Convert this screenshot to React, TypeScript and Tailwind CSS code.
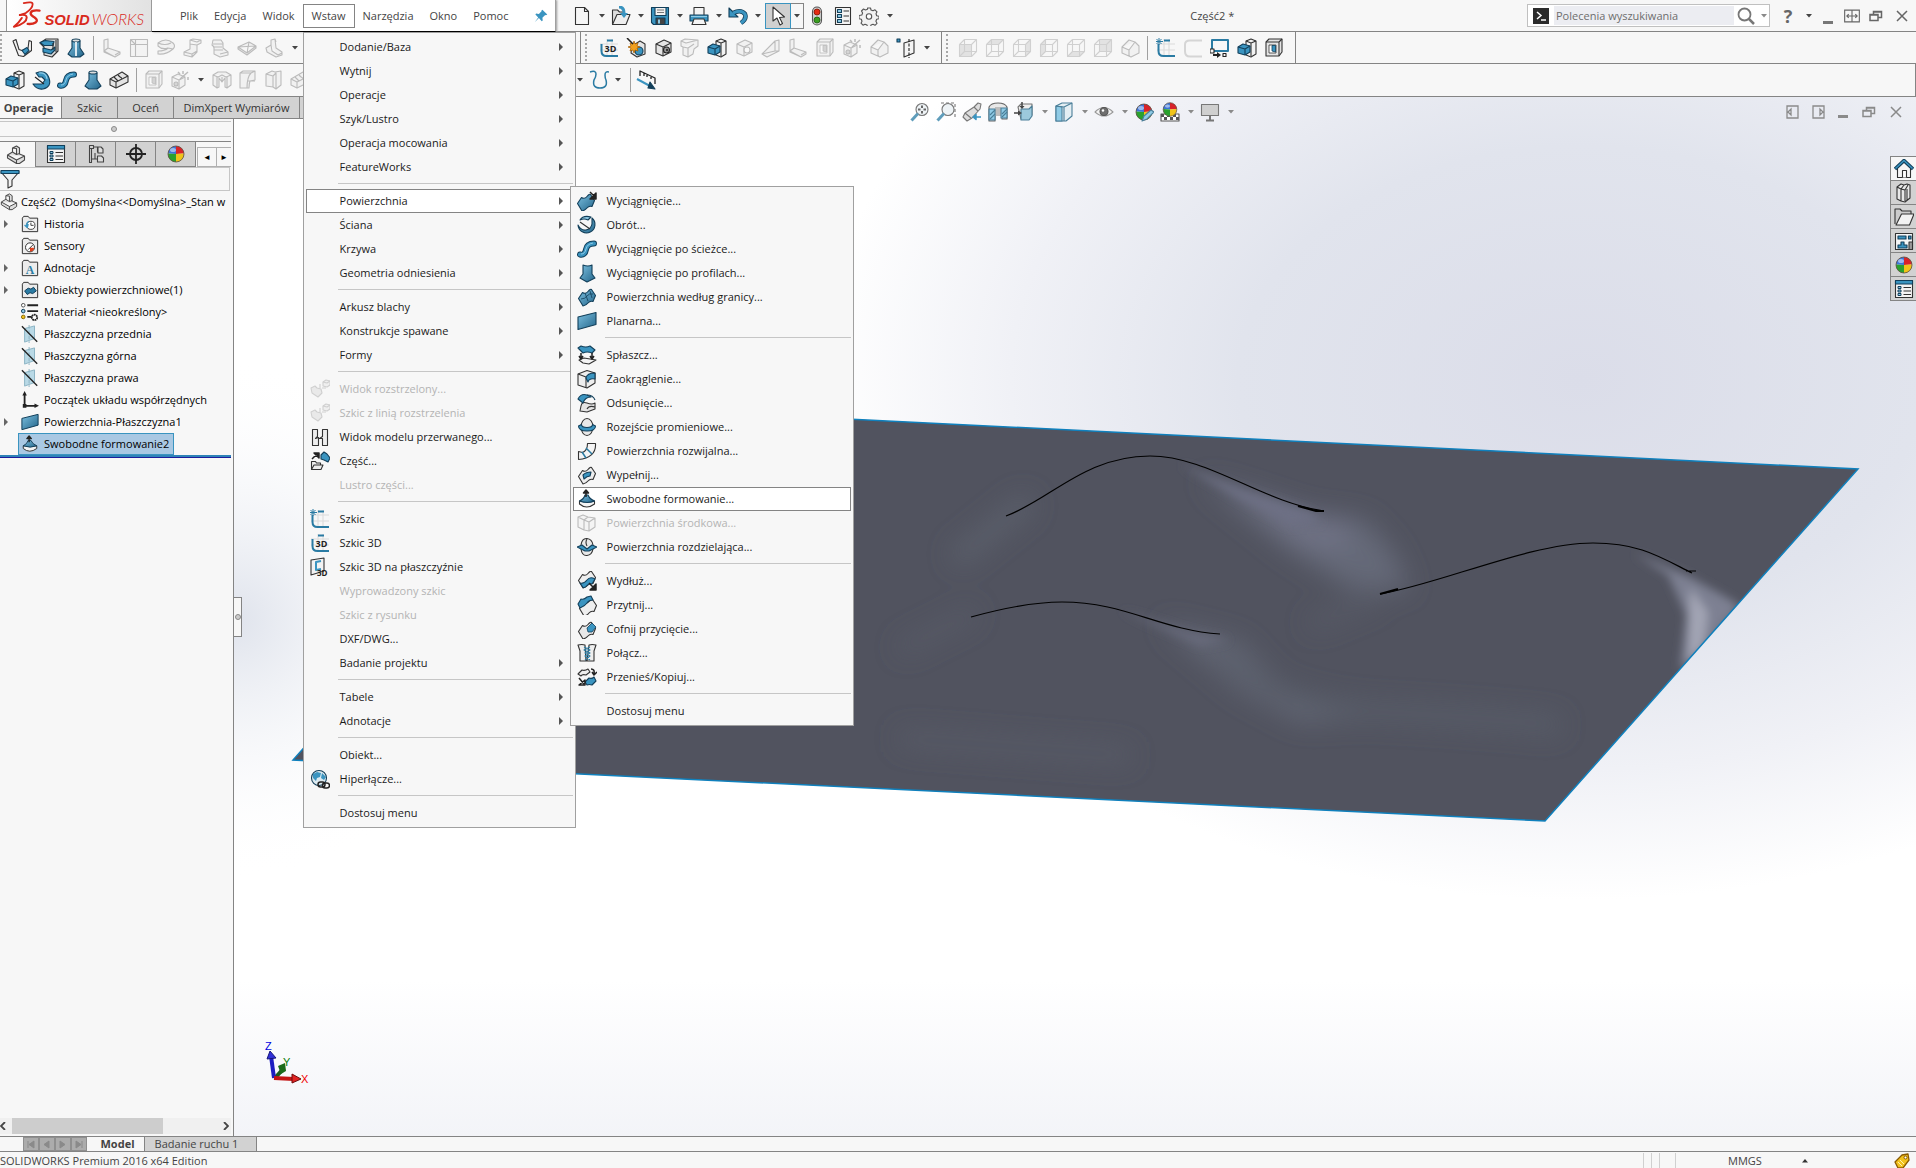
import type { ReactNode } from 'react';
import { clsx } from 'clsx';

const B = '#3a94c0';
const L = '#8fcbe6';
const D = '#123f5a';
const K = '#333333';
const G = '#e4e4e4';

const bigCube = (
  <>
    <path d="M3 6l8-4 7 3v9l-8 4-7-3z" fill={G} stroke={K} />
    <path d="M3 6l7 3v9M10 9l8-4" fill="none" stroke={K} />
  </>
);

const sheet = 'M1.500 10.500l4-6q3 2 5.500-1t3.500-2l4 6-2.500 6q-3-1-5 1.500t-5 3z';

const ball = (
  <>
    <circle cx="10" cy="10" r="8" fill="#f4f4f4" stroke="none" />
    <path d="M10 10V2a8 8 0 0 0-8 7.500z" fill="#3d74d8" stroke="none" />
    <path d="M10 10V2a8 8 0 0 1 8 7.500z" fill="#d8232a" stroke="none" />
    <path d="M10 10l-8-.5A8 8 0 0 0 10 18z" fill="#2aa12e" stroke="none" />
    <path d="M10 10l8-.5A8 8 0 0 1 10 18z" fill="#f0c419" stroke="none" />
    <circle cx="10" cy="10" r="8" fill="none" stroke="#5a4a3a" strokeWidth=".8" />
    <ellipse cx="7" cy="6" rx="3" ry="2" fill="#ffffff" fillOpacity=".5" stroke="none" />
  </>
);

const folder = (
  <path d="M1.500 18.500V3.500l1.500-2h5l1.500 2h9v15z" fill="#ececec" stroke={K} />
);

const part = (
  <path
    d="M1.500 10l5-3V3l4-2 3 2v6l5 2v4l-5 3.500h-3L1.500 13zM6.500 7l4 2.500V3.500l-4-.5M10.500 9.500l3-1M1.500 10l9 5 8-4M10.500 15v3.500"
    fill="#dedede"
    stroke="#4a4a4a"
  />
);

const wire = (face: string) => (
  <>
    <path d={face} fill="#b4b4b4" stroke="none" />
    <path d="M1.500 6.500h12v12h-12zM6.500 1.500h12v12h-12zM1.500 6.500l5-5M13.500 6.500l5-5M1.500 18.500l5-5M13.500 18.500l5-5" fill="none" stroke="#777777" />
  </>
);

const sketch = (
  <>
    <path d="M8 1v18M13 1v18M1 6h18M1 12h18" stroke="#dcdcdc" fill="none" />
    <path d="M8 2.500h6M2.500 6v7q0 5 5 5H19" stroke="#2a7ba3" strokeWidth="2" fill="none" />
  </>
);

const star = <path d="M3 0v7M0 3.500h7M.5 1l5 5M5.500 1l-5 5" stroke="#2a7ba3" strokeWidth="1" fill="none" />;

const planeIcon = (
  <>
    <path d="M4 4l11-3v14L4 19z" fill="#b9d9e6" stroke="#8db4c4" />
    <path d="M9 0v20" stroke="#8db4c4" strokeDasharray="4 2" />
    <path d="M1 1.500L18 18.500" stroke="#222222" strokeWidth="1.500" />
  </>
);

const listIcon = (
  <>
    <path d="M1.500 1.500h17v17h-17z" fill="#f4f4f4" stroke={K} />
    <path d="M1.500 1.500h17V5h-17z" fill={B} stroke={D} />
    <path d="M4 7.500h3v2H4zM4 11h3v2H4zM4 14.500h3v2H4z" fill={L} stroke={D} strokeWidth="1" />
    <path d="M9.500 8.500H17M9.500 12H17M9.500 15.500H17" stroke={K} />
  </>
);

const freeform = (
  <>
    <path d="M2.500 12v3q7 6 15 0v-3z" fill="#f4f4f4" stroke={K} />
    <path d="M2.500 12q4.500-2 5.500-6h3q1.500 4 6.500 6-7 3-15 0z" fill="url(#blueFace)" stroke={D} />
    <path d="M9 8V2M6.500 4L9 1l2.500 3z" stroke="#222222" strokeWidth="1.500" fill="#222222" />
  </>
);

const magnifier = (
  <>
    <circle cx="12" cy="7.500" r="6" fill="#eef3f6" stroke="#777777" />
    <path d="M8 11.500l-6.500 7" stroke="#5f9dbb" strokeWidth="3" fill="none" />
  </>
);

const shell = (
  <>
    <path d="M2 4l3-3h13v13l-3 4H2z" fill="#e4e4e4" stroke={K} />
    <path d="M2 4h13v14M15 4l3-3" fill="none" stroke={K} />
    <path d="M5 7h7v8H5z" fill="#ffffff" stroke={K} strokeWidth=".8" />
    <path d="M8 7.500h3.500V14L8 13z" fill={B} stroke={D} strokeWidth=".8" />
  </>
);

const extrude = (
  <>
    <path d="M9 3l5-2 5 2v13l-5 3-5-2z" fill="#f2f2f2" stroke={K} />
    <path d="M14 5v13M9 3l5 2 5-2" stroke={K} fill="none" />
    <path d="M1 9l5-3 7 2v6l-5 3-7-2z" fill={B} stroke={D} />
    <path d="M1 9l7 2 5-3M8 11v6" stroke={D} fill="none" />
  </>
);

const sweep = (
  <>
    <path d="M3 15.500q5 1 6-5t8-6" stroke={D} strokeWidth="6" fill="none" strokeLinecap="round" />
    <path d="M3 15.500q5 1 6-5t8-6" stroke={B} strokeWidth="4" fill="none" strokeLinecap="round" />
    <path d="M4 15q4 0 5-5t7-6" stroke={L} strokeWidth="1" fill="none" />
  </>
);

const loft = (
  <>
    <path d="M6 3h8v7l4 6-4 3H6l-4-3 4-6z" fill="url(#blueFace)" stroke={D} />
    <ellipse cx="10" cy="2.500" rx="4" ry="1.500" fill="#dddddd" stroke={D} />
  </>
);

const wedge = <path d="M2 2l4-1v9l12 4v2l-5 3-11-5zM2 2v12M6 10l-4 3M13 19l-11-6M13 17l5-3" fill={G} stroke={K} />;

const exploded = (
  <>
    <path d="M1 9l4-2 2 2 4 1 1 4-4 4-6-4z" fill="#cccccc" stroke="#777777" />
    <path d="M13 3l3-2 4 1v4l-3 2-4-1z" fill="#dddddd" stroke="#777777" />
    <path d="M13 3l4 1 3-2M10 5v4M12 9h4" fill="none" stroke="#777777" />
  </>
);

const icons: Record<string, ReactNode> = {
  bend: (
    <>
      <path d="M1 3l3-1.500 3 10 3 1 6-2 1-8 2.500 1v9l-8 6-5-1z" fill="#f2f2f2" stroke={K} />
      <path d="M10 12.500l5-3 2 3-4 4z" fill={B} stroke={D} />
    </>
  ),
  flange: (
    <>
      <path d="M1 5l6-4h12v12l-6 6-8-2V9z" fill="#dddddd" stroke={K} />
      <path d="M1 4.500l5-2 9 1-1 4-9 0zM4 10l8 2 4-3v3l-4 4-8-2z" fill={B} stroke={D} />
      <path d="M14 5v7M17 2v12" stroke={K} />
    </>
  ),
  loft,
  loftBent: (
    <>
      {loft}
      <path d="M10 4v14" stroke="#dce9f0" strokeWidth="2" />
    </>
  ),
  extrude,
  sweep,
  revolve: (
    <>
      <path d="M5 3q10-4 13 5t-6 11q-6 1-10-5h9l3-4-3-3H8z" fill={B} stroke={D} />
      <path d="M4 7l9 7" stroke="#222222" />
      <path d="M8 3q7-1 8 6" stroke={L} fill="none" />
    </>
  ),
  brick: (
    <>
      <path d="M1 9l12-7 6 4v6L7 18l-6-3z" fill={G} stroke={K} />
      <path d="M1 9l6 3v6M7 12l12-6M5 7q3 3 4 4M9 5q3 3 4 3" fill="none" stroke={K} />
    </>
  ),
  shell,
  wedge,
  corner: <path d="M1.500 1.500h17v17h-17zM1.500 6.500h17M6.500 1.500v17M1.500 1.500l5 5" fill="#ebebeb" stroke={K} />,
  hem: <path d="M2 5q8-6 15 0 3 3 0 6-7 6-15 5v-3q7 0 10-3Q6 12 2 8zM2 5q7 3 13 0M12 10l5 1" fill={G} stroke={K} />,
  jog: <path d="M7 2l3-1 8 1v3l-4 2v7l-5 5-8-2v-3l6-3V6zM7 2v4l7 1M9 19v-3l5-3M1 14l8 2M7 2l7 2 4-2" fill={G} stroke={K} />,
  stack: <path d="M3 2h8l2 3v5l5 4v3l-8 2-6-3V9l-2-2zM3 6h10M4 12h9M3 9h9M10 16l8-2" fill={G} stroke={K} />,
  cross: <path d="M1 9l11-5 7 4-9 7zM1 9l18-1M12 4l-2 11M1 9v2l9 6 9-7V8" fill={G} stroke={K} />,
  shoe: <path d="M7 2l4-1 1 9 6 4v3l-6 2-9-5-1-4 5-3zM7 7l1 6 6 4M11 1l1 3M14 17l4-2" fill={G} stroke={K} />,
  wizard: (
    <>
      <path d="M2 7l6-3 7 3v8l-6 4-7-3zM2 7l7 3 6-3M9 10v9" fill={G} stroke={K} />
      <circle cx="6" cy="14" r="2" fill="#888888" stroke={K} />
      <path d="M10 9l8-7M13 1v3M18 7v3M8 2l2 2" stroke={K} strokeWidth="1.500" />
    </>
  ),
  rib: <path d="M1 5l5-3h8l5 3v10l-4 3-2-1V8l-3 4-3-4v9l-2 1-4-3zM10 12V7M1 5l5 2 4-2 4 2 5-2M5 7v11M15 7v11" fill={G} stroke={K} />,
  draft: <path d="M2 3l3-2h12v9l-5 1q-1 3-1 7H2zM2 3h11q-4 4-4 15M13 3l4-2M9 11h8" fill={G} stroke={K} />,
  drum: <path d="M2 4l6-3 3 1 6-1v14l-5 4-3-2-7-1zM2 4l7 2v11M9 6l3-3v15" fill={G} stroke={K} />,
  sketch3d: (
    <>
      {sketch}
      <text x="5.500" y="14" fontSize="9" fontWeight="bold" fill="#222222" stroke="none" fontFamily="Open Sans, sans-serif">3D</text>
    </>
  ),
  sketch: (
    <>
      {sketch}
      {star}
    </>
  ),
  sketchOnly: <path d="M19 2.500H7q-5 0-5 4v7q0 5 5 5H19" stroke="#888888" strokeWidth="2" fill="none" />,
  sketchPlane: (
    <>
      <path d="M1 3l13-2v13L1 18z" fill="#f2f2f2" stroke={K} />
      <path d="M11 4l-5 1v8l5-1" stroke={B} strokeWidth="2" fill="none" />
      <text x="7" y="19" fontSize="8" fontWeight="bold" fill="#222222" stroke="none" fontFamily="Open Sans, sans-serif">3D</text>
    </>
  ),
  burst: (
    <>
      <path d="M6 8l8-5 5 3v10l-8 3-6-4z" fill={G} stroke={K} />
      <circle cx="13" cy="13" r="4" fill={B} stroke={D} />
      <path d="M8 3l1 3 3-1-1 3 3 1-3 1 1 3-3-1-1 3-1-3-3 1 1-3-3-1 3-1-1-3 3 1z" fill="#f2a01e" stroke="#a35c00" strokeWidth=".7" />
      <path d="M1 0l6 6" stroke="#222222" strokeWidth="1.500" />
    </>
  ),
  hole: (
    <>
      {bigCube}
      <circle cx="13.500" cy="12" r="3" fill="#999999" stroke="#222222" />
      <circle cx="14" cy="12" r="1.200" fill="#333333" stroke="none" />
    </>
  ),
  cubeHole: (
    <>
      {bigCube}
      <circle cx="13" cy="12" r="3" fill="#ffffff" stroke={K} />
    </>
  ),
  boxes: <path d="M1 3l4-2 13 1v6l-4 3-1 5-5 3-5-2V9L1 8zM3 9l5 1 6-4M8 10v9M1 3l5 2 12-3" fill={G} stroke={K} />,
  ramp: <path d="M1 16l13-13 4-1v11l-12 6zM14 3v10L1 16M14 13l4 0" fill={G} stroke={K} />,
  chamfer: <path d="M2 9l7-7 6 2 4 4v7l-8 4-9-4zM2 9l7 3 6-8M9 12l0 6" fill={G} stroke={K} />,
  mirrorPlane: (
    <>
      <path d="M8 5l10-3v13L8 19z" fill="#f4f4f4" stroke={K} />
      <path d="M13 1v19" stroke="#222222" strokeDasharray="3 1.500" />
      <path d="M1 1h3v3H1z" fill={B} stroke={D} />
    </>
  ),
  faceFront: wire('M1.500 6.500h12v12h-12z'),
  faceTop: wire('M1.500 6.500l5-5h12l-5 5z'),
  faceRight: wire('M13.500 6.500l5-5v12l-5 5z'),
  faceLeft: wire('M1.500 6.500l5-5v12l-5 5z'),
  faceBottom: wire('M1.500 18.500l5-5h12l-5 5z'),
  faceBack: wire('M6.500 1.500h12v12h-12z'),
  convert: (
    <>
      <path d="M2 2h16v11H2z" fill="none" stroke="#2a7ba3" strokeWidth="2" />
      <path d="M0 11h4v4H0zM13 15.500h3v3h-3z" fill="#f7f7f7" stroke="#222222" />
      <path d="M3 17h5" stroke="#222222" strokeWidth="2" />
      <path d="M7 14l4 3-4 3z" fill="#222222" stroke="none" />
    </>
  ),
  curve: <path d="M1 2q6-2 6 2 0 3-2 6-2 8 6 8t6-8q-1-2-1-5 0-4 4-3" fill="none" stroke="#2a7ba3" strokeWidth="1.500" />,
  ruler: (
    <>
      <path d="M4 6V1l15 7v6M8 6V3M11 7V5M15 9V7" fill="none" stroke="#222222" strokeWidth="1.300" />
      <path d="M1 9l13 7" stroke={B} strokeWidth="2" />
      <path d="M12 18l2-6 5 7z" fill={D} stroke={D} />
    </>
  ),
  fileNew: <path d="M3.500 1.500h9l4 4v13h-13zM12.500 1.500v4h4" fill="#f6f6f6" stroke={K} />,
  fileOpen: (
    <>
      <path d="M1.500 18V4h5l2 2h5v3" fill="#dddddd" stroke={K} />
      <path d="M1.500 18.500L6 8.500h13l-4 10z" fill="#eeeeee" stroke={K} />
      <path d="M8 1q5 0 5 6" stroke={B} strokeWidth="3" fill="none" />
      <path d="M9 7h8l-4 5z" fill={B} stroke="none" />
    </>
  ),
  save: (
    <>
      <path d="M1.500 1.500h17v17H3.500l-2-2z" fill={B} stroke={D} />
      <path d="M5 1.500h11v8H5z" fill="#f2f2f2" stroke={D} />
      <path d="M7 4h7M7 6.500h7" stroke="#777777" />
      <path d="M6 12h9v6.500H6z" fill="#444444" stroke={D} />
      <path d="M8 13.500h2v4H8z" fill={L} stroke="none" />
    </>
  ),
  print: (
    <>
      <path d="M5 9V1.500h10V9" fill="#f4f4f4" stroke={K} />
      <path d="M1 9h18v6H1z" fill={B} stroke={D} />
      <path d="M5 13h10l2 5.500H3z" fill="#f4f4f4" stroke={K} />
      <path d="M2 10.500h16" stroke={L} />
    </>
  ),
  undo: (
    <>
      <path d="M5 7q8-4 12 1 2 5-4 9" fill="none" stroke={D} strokeWidth="4.500" />
      <path d="M1 2v9h9z" fill={B} stroke={D} />
      <path d="M5 7q8-4 12 1 2 5-4 9" fill="none" stroke={B} strokeWidth="3" />
    </>
  ),
  cursor: <path d="M5 1v14l4-3 3 7 2.500-1.500-3-6 5-.5z" fill="#ffffff" stroke={K} />,
  traffic: (
    <>
      <rect x="5.500" y="1" width="9" height="18" rx="4.500" fill="#cfcfcf" stroke="#555555" />
      <circle cx="10" cy="6" r="3" fill="#e52b12" stroke="#7d1200" strokeWidth=".8" />
      <circle cx="10" cy="14" r="3" fill="#3a9e1f" stroke="#1b5a0b" strokeWidth=".8" />
    </>
  ),
  options: (
    <>
      <path d="M2.500 1.500h15v17h-15z" fill="#f4f4f4" stroke={K} />
      <path d="M4.500 3.500h4v3h-4zM4.500 8.500h4v3h-4zM4.500 13.500h4v3h-4z" fill={L} stroke={D} />
      <path d="M10.500 5H16M10.500 10H16M10.500 15H16" stroke={K} />
    </>
  ),
  gear: (
    <>
      <path d="M8.500 2h3l.5 2 2 .8 2-1 2 2-1 2 .7 2 2.300.5v2.500l-2.300.5-.8 2 1.100 2-2 2-2-1-2 .7-.5 2h-3l-.5-2-2-.8-2 1-2-2 1-2-.7-2-2.300-.4V9.500L2.800 9l.8-2-1.100-2 2-2 2 1 2-.7z" fill="#f2f2f2" stroke="#555555" />
      <circle cx="10" cy="10.500" r="2.700" fill="#ffffff" stroke="#555555" />
    </>
  ),
  pin: <path d="M12 1l7 7-2 1-1-.5-4 4 .5 4-1.500 1L7 13l-6 6 5-7-4-4 1-1.500 4 .5 4-4-.5-1z" fill={B} stroke="none" />,
  zoomFit: (
    <>
      {magnifier}
      <path d="M12 3.500v8M8 7.500h8" stroke="#666666" strokeDasharray="2.500 3" strokeWidth="2" />
    </>
  ),
  zoomArea: (
    <>
      <path d="M5 1h14v14" stroke="#777777" strokeDasharray="3 2" fill="none" />
      {magnifier}
    </>
  ),
  prevView: (
    <>
      <path d="M1 15l2-4 9-6 4-4 3 1-1 5-8 9-5 3z" fill="#dddddd" stroke="#777777" />
      <path d="M3 11l6 5M12 5l4 4" stroke="#777777" />
      <path d="M19 15h-6M14 12.500l-3 2.500 3 2.500z" fill={B} stroke={B} strokeWidth="1.500" />
    </>
  ),
  section: (
    <>
      <path d="M1 5q2-4 9-4t9 4v12h-5V8H7v11H1z" fill="#e8e8e8" stroke="#666666" />
      <path d="M7 5h6v9H7z" fill="#bdbdbd" stroke="none" />
      <path d="M1 7h6v11H1zM13 6h6v10h-6z" fill={L} stroke="#4a7f99" />
      <path d="M2 13l5-5M2 17l5-5M14 12l5-5M14 15l5-5" stroke="#4a7f99" />
    </>
  ),
  orient: (
    <>
      <path d="M4 5l3-3h11v11l-3 4H7z" fill="#eeeeee" stroke="#777777" />
      <path d="M7 7h8l3-3v10l-3 4H7z" fill="#9cc9dc" stroke="#4a7f99" />
      <path d="M0 11h5M8 0v5" stroke="#444444" strokeWidth="1.500" />
      <path d="M4 8.500l4 2.500-4 2.500zM5.500 4l2.500 3 2.500-3z" fill="#444444" stroke="none" />
    </>
  ),
  display: (
    <>
      <path d="M2 4l6-3h10v13l-6 5H2z" fill="#e4eef3" stroke="#4a7f99" />
      <path d="M2 4l6 1v14H2z" fill={L} stroke="#4a7f99" />
      <path d="M2 4l8 1v14M10 5l8-4" stroke="#4a7f99" fill="none" />
    </>
  ),
  eye: (
    <>
      <path d="M1 10q9-9 18 0-9 8-18 0z" fill="#f2f2f2" stroke="#999999" />
      <circle cx="10" cy="9.500" r="4" fill="#6f6f6f" stroke="#555555" />
      <circle cx="9" cy="8.500" r="1.200" fill="#ffffff" stroke="none" />
    </>
  ),
  ball,
  ballBrush: (
    <>
      {ball}
      <path d="M8 19l2-5 7-6 3 2-7 7z" fill={L} stroke="#4a7f99" />
    </>
  ),
  ballGrid: (
    <>
      <path d="M1 12h18v7H1z" fill="#ffffff" stroke="#555555" />
      <path d="M1 12h3v3H1zM7 12h3v3H7zM13 12h3v3h-3zM4 15h3v3H4zM10 15h3v3h-3zM16 15h3v3h-3z" fill="#555555" stroke="none" />
      <g transform="translate(1.500 -1) scale(.85)">{ball}</g>
    </>
  ),
  monitor: (
    <>
      <path d="M1.500 2.500h17v11h-17z" fill="#cfcfcf" stroke="#777777" />
      <path d="M10 14v4M6 18.500h8" stroke="#777777" strokeWidth="2" />
    </>
  ),
  part,
  list: listIcon,
  config: (
    <>
      <path d="M3.500 1.500h4v3h-4zM5.500 4.500v14h-2v-17M7.500 3h4v5h3M5.500 15h6M9 9v6" fill="none" stroke="#444444" />
      <path d="M12 3h3l2 2v4h-5zM11.500 12h4l2 2v4h-6z" fill="#dddddd" stroke="#444444" />
    </>
  ),
  target: (
    <>
      <circle cx="10" cy="10" r="6" fill="none" stroke="#222222" strokeWidth="1.800" />
      <path d="M10 0v20M0 10h20" stroke="#222222" strokeWidth="1.800" />
    </>
  ),
  funnel: (
    <>
      <path d="M1 3l7 8v8l4-2v-6l7-8z" fill="#f2f2f2" stroke={K} />
      <path d="M1 1.500h18v3H1z" fill={B} stroke={D} />
    </>
  ),
  history: (
    <>
      {folder}
      <circle cx="11" cy="11.500" r="4.500" fill="#ffffff" stroke="#444444" />
      <path d="M11 8.500v3h3" stroke="#444444" fill="none" />
      <path d="M4 11l3 3 1-4M7 14q-2-6 2-7" stroke={B} strokeWidth="1.500" fill="none" />
    </>
  ),
  sensor: (
    <>
      {folder}
      <circle cx="10" cy="11.500" r="5" fill="#ffffff" stroke={K} />
      <path d="M10 12h4.500q0 4-4.500 4z" fill="#e2401c" stroke="none" />
      <path d="M8 14l5-5" stroke={K} />
    </>
  ),
  note: (
    <>
      {folder}
      <text x="10" y="16.500" fontSize="13" fontWeight="bold" textAnchor="middle" fill="#2a7ba3" stroke="none" fontFamily="Liberation Serif, serif">A</text>
    </>
  ),
  bodies: (
    <>
      {folder}
      <path d="M4 11l4-3 3 1 3-2 3 4-4 3-3-1-3 2z" fill="#2a7ba3" stroke={D} />
    </>
  ),
  material: (
    <>
      <path d="M7 2.500h12M7 9h12M7 15.500h5" stroke="#222222" strokeWidth="2" />
      <circle cx="2.500" cy="2.500" r="2" fill="#ffffff" stroke="#555555" />
      <circle cx="2.500" cy="9" r="2" fill={L} stroke={D} />
      <circle cx="2.500" cy="15.500" r="2" fill="#f2c21e" stroke="#8a6a00" />
      <circle cx="15" cy="16" r="3" fill="#ffffff" stroke="#222222" strokeWidth="2" strokeDasharray="2 .6" />
    </>
  ),
  plane: planeIcon,
  origin: (
    <>
      <path d="M4 17V4M4 16.500h12" stroke="#222222" strokeWidth="2" />
      <path d="M1.500 5L4 0l2.500 5zM15 14l5 2.500-5 2.500zM2 14.500h4v4H2z" fill="#222222" stroke="none" />
    </>
  ),
  planar: <path d="M1 6l18-4.500v12L1 18.500z" fill="url(#blueFace)" stroke={D} />,
  freeform,
  exploded,
  broken: <path d="M2.500 2.500h5v7l-2 2 3-1v8h-6zM17.500 2.500h-5v7l-3 2 3 0v7h5z" fill="#eeeeee" stroke={K} />,
  insertPart: (
    <>
      <path d="M1.500 18.500v-8h4l1 1.500h4v2H4zM4 14h9l-2 4.500H1.500" fill="#eeeeee" stroke={K} />
      <path d="M2 8l5-5M4 2h5v5z" fill="#222222" stroke="#222222" strokeWidth="1.500" />
      <path d="M11 4l3-3 3 2 3 4-2 4-4-2-3-1z" fill={B} stroke={D} />
    </>
  ),
  globe: (
    <>
      <circle cx="9" cy="9" r="7.500" fill="#ddeaf0" stroke={D} />
      <path d="M3 5l4-2 4 1-1 4-3 1-1 3-3-3zM12 4l4 4-2 3-3-2z" fill={B} stroke="none" />
      <rect x="8" y="13" width="7" height="5" rx="2.500" fill="none" stroke="#222222" strokeWidth="1.500" />
      <rect x="12.500" y="14" width="7" height="5" rx="2.500" fill="none" stroke="#222222" strokeWidth="1.500" />
    </>
  ),
  surfExtrude: (
    <>
      <path d={sheet} transform="translate(-1 2)" fill="url(#blueFace)" stroke={D} />
      <path d="M13 1l4 4M19 2v6h-6z" stroke="#222222" strokeWidth="1.500" fill="#222222" />
    </>
  ),
  surfRevolve: (
    <>
      <path d="M15 3a8.500 8.500 0 1 1-14 7q3 6 8 5t6-6z" fill="url(#blueFace)" stroke={D} />
      <path d="M3 5q3-5 11-3l-3 3q-4-2-8 0z" fill={L} stroke={D} />
      <path d="M3 7l10 7" stroke={K} />
    </>
  ),
  surfLoft: <path d="M6 2q5 2 9 0v9l3 4-8 4-7-4 3-4z" fill="url(#blueFace)" stroke={D} />,
  surfBoundary: (
    <>
      <path d={sheet} transform="translate(0 1)" fill="url(#blueFace)" stroke={D} />
      <path d="M4 12q4 0 6-3t6-2M8 6l3 8M13 4l2 7" fill="none" stroke={D} strokeWidth=".8" />
    </>
  ),
  flatten: (
    <>
      <path d="M2 15l5-2 12 2-7 4-6-1z" fill="#f4f4f4" stroke={K} />
      <path d="M1 3l3-2q5 2 9 0l5 4-3 3q-5-2-9 0z" fill={B} stroke={D} />
      <path d="M4 8v6M15 8v6M2 11l2 3 2-3M13 11l2 3 2-3" fill="none" stroke="#222222" strokeWidth="1.500" />
    </>
  ),
  fillet: (
    <>
      <path d="M1 5l9-3.500 8 2.500v10l-8 5-9-3z" fill="#eeeeee" stroke={K} />
      <path d="M1 5l8 3v11" fill="none" stroke={K} />
      <path d="M9 9q1-5 9-5v6q-6-1-7 3z" fill={B} stroke={D} />
    </>
  ),
  offset: (
    <>
      <path d="M4 13q1-5 6-3t8 0v6l-8 3-7-1z" fill="#e4e4e4" stroke={K} />
      <path d="M10 16q2-4 8-2" fill="none" stroke={K} />
      <path d="M1 6q3-6 9-4l4 2q-6 0-8 6z" fill={B} stroke={D} />
      <path d="M10 2q6 0 8 5" fill="none" stroke={D} />
    </>
  ),
  radiate: (
    <>
      <ellipse cx="10" cy="10" rx="6" ry="8.500" fill="#e8e8e8" stroke={K} />
      <path d="M1.500 9l3-1.500q0 3 5.500 3t5.500-3l3 1.500q0 5-8.500 5T1.500 9z" fill={B} stroke={D} />
    </>
  ),
  ruled: (
    <>
      <path d="M1.500 10.500l4 1q5-2 5-9h8q1 14-17 16z" fill="#f4f4f4" stroke={K} />
      <path d="M5 11l4 6M9 7l6 6" stroke="#2a7ba3" strokeWidth="1.500" />
    </>
  ),
  fill: (
    <>
      <path d={sheet} transform="translate(0 1)" fill="#eeeeee" stroke={K} />
      <path d="M6 10q3-3 8-3l-1 4q-3 0-6 3z" fill={B} stroke={D} />
    </>
  ),
  midSurface: <path d="M1 4l5-2 5 2 7 1v9l-6 4-5-1-6-3zM1 4l6 3v10M7 7l4-3M12 9l6-4M12 9v9M7 7l5 2" fill="#eeeeee" stroke={K} />,
  parting: (
    <>
      <path d="M4 8q1-7 6-6.500T16 8v4q-1 6-6 6.500T4 12z" fill="#e8e8e8" stroke={K} />
      <path d="M0 10l5-2 5 4 5-4 5 2-8 4h-4z" fill={B} stroke={D} />
      <path d="M10 2q-2 3 0 7" fill="none" stroke={K} />
    </>
  ),
  extend: (
    <>
      <path d={sheet} transform="translate(0 -1)" fill="#eeeeee" stroke={K} />
      <path d="M3 12q4 1 7-3t8-1l-3 5q-3-1-5 1.500t-4 2z" fill={B} stroke={D} />
      <path d="M12 12l5 5M19 13v6h-6z" stroke="#222222" strokeWidth="1.500" fill="#222222" />
    </>
  ),
  trim: (
    <>
      <path d={sheet} transform="translate(1 3)" fill="#eeeeee" stroke={K} />
      <path d="M1 9l3-5q3 1 6-2l4-1 2 4q-4 0-6 3t-7 5z" fill={B} stroke={D} />
    </>
  ),
  untrim: (
    <>
      <path d={sheet} transform="translate(0 2)" fill="#e8e8e8" stroke={K} />
      <path d="M10 9l5-5 4 4-4 5-4 0z" fill={B} stroke={D} strokeWidth=".8" />
    </>
  ),
  knit: (
    <>
      <path d="M1 2q4-1 7 0l1 16H3V8zM19 2q-4-1-7 0l-2 16h7V8z" fill="#eeeeee" stroke={K} />
      <path d="M7 4l6 3-5 3 5 3-5 4M13 4L7 7l6 3-5 3 5 4" stroke="#2a7ba3" fill="none" />
    </>
  ),
  moveCopy: (
    <>
      <path d="M1 7l4-4q3 1 6-1l2 3-4 3q-4-1-5 1z" fill="#eeeeee" stroke={K} />
      <path d="M8 15l4-4q3 1 5-1l2 4-4 4q-3-1-5 0z" fill={B} stroke={D} />
      <path d="M14 2q4 0 3 5M15 5l2 3 3-3M2 11l5 6M8 13v5H2z" fill="none" stroke="#222222" strokeWidth="1.500" />
    </>
  ),
  home: (
    <>
      <path d="M3.500 9v9.500h13V9L10 3z" fill="#f6f6f6" stroke={K} />
      <path d="M1 10l9-8.500 9 8.500" fill="none" stroke={D} strokeWidth="3.500" />
      <path d="M1.500 9.500L10 1.500l8.500 8" fill="none" stroke={B} strokeWidth="1.500" />
      <path d="M8.500 18.500v-7h4v7" fill="#ffffff" stroke={K} />
    </>
  ),
  books: <path d="M3 4l4-3 3 1 3-1 3 1v13l-5 4-4-1-4-2zM3 4l4 2v12M7 6l3-4M7 6l4 1v11M11 7l3-5M13 6v11" fill="#e8e8e8" stroke={K} />,
  folderOpen: (
    <>
      <path d="M1 17V2h5l2 2h9v3" fill="#cccccc" stroke={K} />
      <path d="M2 18L7.500 7H20l-4.500 11z" fill="#f2f2f2" stroke={K} />
    </>
  ),
  palette: (
    <>
      <path d="M1.500 2.500h17v16h-17z" fill="#f6f6f6" stroke={K} />
      <path d="M4 5h8v3H4zM14.500 5H17v3h-2.500zM7 11h3v3h3v3H4v-3h3z" fill={B} stroke={D} />
      <path d="M15 11h3.500v7.500H15z" fill="#999999" stroke={K} />
    </>
  ),
};

function Icon({ name, off, size = 'size-5' }: { name: string; off?: boolean; size?: string }) {
  return (
    <svg viewBox="0 0 20 20" className={clsx('shrink-0', size, off && 'opacity-30 grayscale')} strokeWidth="1.100" strokeLinejoin="round" aria-hidden>
      {icons[name]}
    </svg>
  );
}

function Caret({ off }: { off?: boolean }) {
  return (
    <svg viewBox="0 0 6 4" className={clsx('w-1.5 h-1 shrink-0', off ? 'text-[#8a8a8a]' : 'text-[#444444]')} aria-hidden>
      <path d="M0 0h6L3 3.500z" fill="currentColor" />
    </svg>
  );
}

type Tool = { icon: string; off?: boolean } | 'caret' | 'sep';

const on = (...names: string[]): Tool[] => names.map((icon) => ({ icon }));
const off = (...names: string[]): Tool[] => names.map((icon) => ({ icon, off: true }));

function Tools({ tools, cell }: { tools: Tool[]; cell: string }) {
  return (
    <>
      {tools.map((tool, i) => {
        if (tool === 'sep') {
          return <span key={i} className="mx-1 h-6 w-px shrink-0 bg-[#a0a0a0]" />;
        }
        if (tool === 'caret') {
          return (
            <button key={i} type="button" aria-label="Więcej" className="flex h-6 w-4 shrink-0 items-center justify-center">
              <Caret />
            </button>
          );
        }
        return (
          <button key={i} type="button" aria-label={tool.icon} disabled={tool.off} className={clsx('flex h-6 shrink-0 items-center justify-center', cell)}>
            <Icon name={tool.icon} off={tool.off} />
          </button>
        );
      })}
    </>
  );
}

function Grip() {
  return <span className="mx-1 h-[27px] w-0 shrink-0 border-l-2 border-dotted border-[#a8a8a8]" />;
}

type Entry = { label: string; icon?: string; sub?: boolean; off?: boolean } | null;

const insertMenu: Entry[] = [
  { label: 'Dodanie/Baza', sub: true },
  { label: 'Wytnij', sub: true },
  { label: 'Operacje', sub: true },
  { label: 'Szyk/Lustro', sub: true },
  { label: 'Operacja mocowania', sub: true },
  { label: 'FeatureWorks', sub: true },
  null,
  { label: 'Powierzchnia', sub: true },
  { label: 'Ściana', sub: true },
  { label: 'Krzywa', sub: true },
  { label: 'Geometria odniesienia', sub: true },
  null,
  { label: 'Arkusz blachy', sub: true },
  { label: 'Konstrukcje spawane', sub: true },
  { label: 'Formy', sub: true },
  null,
  { label: 'Widok rozstrzelony...', icon: 'exploded', off: true },
  { label: 'Szkic z linią rozstrzelenia', icon: 'exploded', off: true },
  { label: 'Widok modelu przerwanego...', icon: 'broken' },
  { label: 'Część...', icon: 'insertPart' },
  { label: 'Lustro części...', off: true },
  null,
  { label: 'Szkic', icon: 'sketch' },
  { label: 'Szkic 3D', icon: 'sketch3d' },
  { label: 'Szkic 3D na płaszczyźnie', icon: 'sketchPlane' },
  { label: 'Wyprowadzony szkic', off: true },
  { label: 'Szkic z rysunku', off: true },
  { label: 'DXF/DWG...' },
  { label: 'Badanie projektu', sub: true },
  null,
  { label: 'Tabele', sub: true },
  { label: 'Adnotacje', sub: true },
  null,
  { label: 'Obiekt...' },
  { label: 'Hiperłącze...', icon: 'globe' },
  null,
  { label: 'Dostosuj menu' },
];

const surfaceMenu: Entry[] = [
  { label: 'Wyciągnięcie...', icon: 'surfExtrude' },
  { label: 'Obrót...', icon: 'surfRevolve' },
  { label: 'Wyciągnięcie po ścieżce...', icon: 'sweep' },
  { label: 'Wyciągnięcie po profilach...', icon: 'surfLoft' },
  { label: 'Powierzchnia według granicy...', icon: 'surfBoundary' },
  { label: 'Planarna...', icon: 'planar' },
  null,
  { label: 'Spłaszcz...', icon: 'flatten' },
  { label: 'Zaokrąglenie...', icon: 'fillet' },
  { label: 'Odsunięcie...', icon: 'offset' },
  { label: 'Rozejście promieniowe...', icon: 'radiate' },
  { label: 'Powierzchnia rozwijalna...', icon: 'ruled' },
  { label: 'Wypełnij...', icon: 'fill' },
  { label: 'Swobodne formowanie...', icon: 'freeform' },
  { label: 'Powierzchnia środkowa...', icon: 'midSurface', off: true },
  { label: 'Powierzchnia rozdzielająca...', icon: 'parting' },
  null,
  { label: 'Wydłuż...', icon: 'extend' },
  { label: 'Przytnij...', icon: 'trim' },
  { label: 'Cofnij przycięcie...', icon: 'untrim' },
  { label: 'Połącz...', icon: 'knit' },
  { label: 'Przenieś/Kopiuj...', icon: 'moveCopy' },
  null,
  { label: 'Dostosuj menu' },
];

function Menu({ entries, active, className, children }: { entries: Entry[]; active: string; className: string; children?: ReactNode }) {
  return (
    <ul role="menu" className={clsx('absolute z-20 border border-[#a0a0a0] bg-[#f7f7f7] p-0.5', className)}>
      {entries.map((entry, i) =>
        entry === null ? (
          <li key={i} role="separator" className="flex h-2.5 items-center pl-8">
            <span className="h-px flex-1 bg-[#c6c6c6]" />
          </li>
        ) : (
          <li key={i} role="none" className="relative">
            <button
              type="button"
              role="menuitem"
              disabled={entry.off}
              className={clsx(
                'flex h-6 w-full items-center border pl-[3px] pr-[9px] text-left',
                entry.label === active ? 'border-[#848484] bg-white' : 'border-transparent',
                entry.off ? 'text-[#b4b4b4]' : 'text-[#1a1a1a]',
              )}
            >
              <span className="flex w-[30px] shrink-0">{entry.icon && <Icon name={entry.icon} off={entry.off} />}</span>
              <span className="flex-1 whitespace-nowrap">{entry.label}</span>
              {entry.sub && (
                <svg viewBox="0 0 4 8" className="h-2 w-1" aria-hidden>
                  <path d="M0 0l4 4-4 4z" fill="#555555" />
                </svg>
              )}
            </button>
            {entry.label === active && children}
          </li>
        ),
      )}
    </ul>
  );
}

function Logo() {
  return (
    <svg viewBox="0 0 146 31" className="ml-1.5 h-[31px] w-[146px] shrink-0 border-x border-[#9a9a9a] bg-gradient-to-r from-white to-[#e2e2e2]" role="img" aria-label="SOLIDWORKS">
      <g fill="none" stroke="#d9291c" strokeLinecap="round" strokeLinejoin="round">
        <path d="M17 3q9-2 9 1 0 4-7 9l-6 2" strokeWidth="1.800" />
        <path d="M13 15q7-1 7 2.500 0 6-13 9.500 5-4 8-9" strokeWidth="2" />
        <path d="M33 10.500q-9-1-9 3 0 2 4 4 4 3 1 5-3 2-8 1.500" strokeWidth="2.400" />
      </g>
      <text x="38" y="25" fontSize="15" fontStyle="italic" fontWeight="bold" fill="#d9291c" fontFamily="Liberation Sans, sans-serif">SOLID</text>
      <text x="86" y="25" fontSize="16" fontStyle="italic" fontWeight="300" fill="#d9291c" fontFamily="Lato, sans-serif">WORKS</text>
    </svg>
  );
}

function RestoreIcon() {
  return (
    <svg viewBox="0 0 14 12" className="h-3 w-3.5" fill="none" stroke="currentColor" strokeWidth="1.500" aria-hidden>
      <path d="M1 4.500h8v6H1zM4.500 4V1.500h8v6H9.500M1 5h8M4.500 2h8" />
    </svg>
  );
}

function CloseIcon() {
  return (
    <svg viewBox="0 0 12 12" className="size-3" fill="none" stroke="currentColor" strokeWidth="1.500" aria-hidden>
      <path d="M1 1l10 10M11 1L1 11" />
    </svg>
  );
}

const quickTools = ['fileNew', 'fileOpen', 'save', 'print', 'undo'];

function TitleBar() {
  return (
    <header className="relative z-20 flex h-8 shrink-0 border-b border-[#848484] bg-[#f7f7f7] text-[#444444]">
      <Logo />
      <nav className="flex h-8 shrink-0 items-center border-b border-r border-b-black border-r-[#a0a0a0] bg-white pl-5 pr-1.5 shadow-[1px_0_2px_#999999]">
        {['Plik', 'Edycja', 'Widok', 'Wstaw', 'Narzędzia', 'Okno', 'Pomoc'].map((label) =>
          label === 'Wstaw' ? (
            <div key={label} className="relative flex h-8 items-center">
              <button type="button" className="h-6 border border-[#848484] bg-white px-2">
                {label}
              </button>
              <Menu entries={insertMenu} active="Powierzchnia" className="left-0 top-full w-[273px]">
                <Menu entries={surfaceMenu} active="Swobodne formowanie..." className="-top-[3px] left-[264px] w-[284px]" />
              </Menu>
            </div>
          ) : (
            <button key={label} type="button" className="px-2">
              {label}
            </button>
          ),
        )}
        <button type="button" aria-label="Przypnij" className="ml-4 flex w-4 justify-center">
          <Icon name="pin" size="size-3.5" />
        </button>
      </nav>
      <div className="flex items-center pl-4">
        {quickTools.map((name) => (
          <div key={name} className="flex w-[39px] items-center gap-[7px]">
            <button type="button" aria-label={name}>
              <Icon name={name} />
            </button>
            <Caret />
          </div>
        ))}
        <button type="button" aria-label="Wybierz" className="-ml-0.5 flex h-[26px] w-[26px] items-center justify-center border border-[#3a94c0] bg-[#d0d0d0]">
          <Icon name="cursor" />
        </button>
        <button type="button" aria-label="Opcje wyboru" className="flex h-[26px] w-[13px] items-center justify-center border border-l-0 border-[#848484]">
          <Caret />
        </button>
        <Tools tools={on('traffic', 'options', 'gear')} cell="w-[26px]" />
        <Tools tools={['caret']} cell="w-4" />
      </div>
      <h1 className="flex-1 self-center text-center">Część2 *</h1>
      <div className="flex h-[23px] w-[243px] shrink-0 items-center self-center border border-[#c0c0c0] bg-white">
        <span className="mx-[5px] flex size-4 shrink-0 items-center justify-center bg-[#2b2b2b] text-white">
          <svg viewBox="0 0 12 12" className="size-3" fill="none" stroke="currentColor" strokeWidth="1.500" aria-hidden>
            <path d="M2 2l4 3.500L2 9M6 10h5" />
          </svg>
        </span>
        <input type="text" aria-label="Polecenia wyszukiwania" placeholder="Polecenia wyszukiwania" className="h-[19px] w-[180px] bg-[#ecedf2] px-0.5 placeholder:text-[#6e6e6e]" />
        <button type="button" aria-label="Szukaj" className="flex flex-1 items-center justify-center gap-1.5 text-[#777777]">
          <svg viewBox="0 0 18 18" className="size-[18px]" fill="none" stroke="currentColor" strokeWidth="1.800" aria-hidden>
            <circle cx="7.500" cy="7.500" r="6" />
            <path d="M12 12l5 5" strokeWidth="2.500" />
          </svg>
          <Caret off />
        </button>
      </div>
      <div className="flex shrink-0 items-center text-[#666666]">
        <button type="button" aria-label="Pomoc" className="w-9 text-lg font-bold">
          ?
        </button>
        <Caret />
        <button type="button" aria-label="Minimalizuj" className="flex h-4 w-8 items-end justify-center">
          <span className="h-[3px] w-2.5 bg-[#777777]" />
        </button>
        <button type="button" aria-label="Rozciągnij" className="flex w-4 justify-center">
          <svg viewBox="0 0 17 14" className="h-3.5 w-[17px]" fill="none" stroke="currentColor" strokeWidth="1.200" aria-hidden>
            <path d="M.7.7h15.600v12.600H.7zM8.500 1v12M3 7h11M5 5L3 7l2 2M12 5l2 2-2 2" />
          </svg>
        </button>
        <button type="button" aria-label="Przywróć" className="flex w-8 justify-center">
          <RestoreIcon />
        </button>
        <button type="button" aria-label="Zamknij" className="mr-1 flex w-5 justify-center">
          <CloseIcon />
        </button>
      </div>
    </header>
  );
}

function Toolbars() {
  return (
    <div className="shrink-0 bg-[#f7f7f7]">
      <div className="flex h-8 items-center border-b border-[#848484]">
        <div className="flex h-full w-[581px] shrink-0 items-center border-r border-[#848484]">
          <span className="h-[27px] w-0 shrink-0 border-l-2 border-dotted border-[#a8a8a8]" />
          <span className="w-1.5" />
          <Tools
            cell="w-[27px]"
            tools={[...on('bend', 'flange', 'loftBent'), 'sep', ...off('wedge', 'corner', 'hem', 'jog', 'stack', 'cross', 'shoe'), 'caret']}
          />
        </div>
        <div className="flex h-full w-[361px] shrink-0 items-center border-r border-[#848484]">
          <Grip />
          <span className="w-1" />
          <Tools
            cell="w-[27px]"
            tools={[
              ...on('sketch3d', 'burst', 'hole'),
              ...off('boxes'),
              ...on('extrude'),
              ...off('cubeHole', 'ramp', 'wedge', 'shell', 'wizard', 'chamfer'),
              ...on('mirrorPlane'),
              'caret',
            ]}
          />
        </div>
        <div className="flex h-full w-[354px] shrink-0 items-center border-r border-[#848484]">
          <Grip />
          <span className="w-0.5" />
          <Tools
            cell="w-[27px]"
            tools={[
              ...off('faceFront', 'faceTop', 'faceRight', 'faceLeft', 'faceBottom', 'faceBack', 'chamfer'),
              'sep',
              ...on('sketch'),
              ...off('sketchOnly'),
              ...on('convert', 'extrude', 'shell'),
            ]}
          />
        </div>
      </div>
      <div className="flex h-[33px] items-center border-b border-r border-[#848484]">
        <div className="flex w-[572px] shrink-0 items-center pl-0.5">
          <Tools
            cell="w-[26px]"
            tools={[
              ...on('extrude', 'revolve', 'sweep', 'loft', 'brick'),
              'sep',
              ...off('shell', 'wizard'),
              'caret',
              ...off('rib', 'draft', 'drum', 'brick'),
            ]}
          />
        </div>
        <Tools cell="w-[22px]" tools={['caret', ...on('curve'), 'caret', 'sep', ...on('ruler')]} />
      </div>
    </div>
  );
}

const treeItems = [
  { label: 'Historia', icon: 'history', open: true },
  { label: 'Sensory', icon: 'sensor' },
  { label: 'Adnotacje', icon: 'note', open: true },
  { label: 'Obiekty powierzchniowe(1)', icon: 'bodies', open: true },
  { label: 'Materiał <nieokreślony>', icon: 'material' },
  { label: 'Płaszczyzna przednia', icon: 'plane' },
  { label: 'Płaszczyzna górna', icon: 'plane' },
  { label: 'Płaszczyzna prawa', icon: 'plane' },
  { label: 'Początek układu współrzędnych', icon: 'origin' },
  { label: 'Powierzchnia-Płaszczyzna1', icon: 'planar', open: true },
  { label: 'Swobodne formowanie2', icon: 'freeform', selected: true },
];

function FeaturePanel() {
  return (
    <aside className="flex w-[234px] shrink-0 flex-col border-r border-[#848484] bg-[#f7f7f7]">
      <div className="relative z-10 flex h-[22px] w-max shrink-0 items-stretch border-b border-[#848484] text-[#333333]">
        <button type="button" className="w-[61px] bg-[#f7f7f7] pr-1 text-center font-bold text-[#444444]">Operacje</button>
        <button type="button" className="w-14 border-l border-[#848484] bg-[#d2d2d2]">Szkic</button>
        <button type="button" className="w-14 border-l border-[#848484] bg-[#d2d2d2]">Oceń</button>
        <button type="button" className="w-[127px] border-x border-[#848484] bg-[#d2d2d2]">DimXpert Wymiarów</button>
        <span className="w-10 bg-[#d2d2d2]" />
      </div>
      <div className="mt-0.5 mr-0.5 flex h-4 shrink-0 items-center justify-center border-y border-[#c6c6c6] pr-1">
        <span className="size-1.5 rounded-full border border-[#8a8a8a] bg-[#cccccc]" />
      </div>
      <div className="mt-1 mr-0.5 flex h-[26px] shrink-0">
        <button type="button" aria-label="Drzewo operacji" className="flex w-[35px] items-center justify-center border-t border-[#848484] pr-1">
          <Icon name="part" />
        </button>
        {['list', 'config', 'target', 'ball'].map((name) => (
          <button key={name} type="button" aria-label={name} className="flex w-10 items-center justify-center border-y border-l border-[#848484] bg-[#d2d2d2]">
            <Icon name={name} />
          </button>
        ))}
        <div className="flex flex-1 items-end border-l border-t border-[#848484] pl-px">
          <button type="button" aria-label="Wstecz" className="h-5 w-5 border border-[#b0b0b0] text-[8px] text-black">◄</button>
          <button type="button" aria-label="Dalej" className="h-5 flex-1 border-y border-[#b0b0b0] text-[8px] text-black">►</button>
        </div>
      </div>
      <div className="mr-[3px] flex h-6 shrink-0 items-center border-b border-r border-t border-[#c6c6c6]">
        <Icon name="funnel" />
      </div>
      <ul className="mr-0.5 flex-1 overflow-hidden text-black">
        <li className="flex h-[22px] items-center gap-[3px] whitespace-pre">
          <Icon name="part" size="size-[18px]" />
          Część2  (Domyślna&lt;&lt;Domyślna&gt;_Stan w
        </li>
        {treeItems.map((item) => (
          <li key={item.label} className="flex h-[22px] items-center">
            <span className="w-[18px] shrink-0 pl-1">
              {item.open && (
                <svg viewBox="0 0 4 8" className="h-2 w-1" aria-hidden>
                  <path d="M0 0l4 4-4 4z" fill="#666666" />
                </svg>
              )}
            </span>
            <span
              className={clsx(
                'flex h-[22px] items-center gap-[5px] whitespace-nowrap border pl-0.5 pr-1',
                item.selected ? 'border-[#3a94c0] bg-[#a9c8e3]' : 'border-transparent',
              )}
            >
              <Icon name={item.icon} size="size-[18px]" />
              {item.label}
            </span>
          </li>
        ))}
        <li className="h-[3px] border-b border-[#1c1c9c] bg-[#2f83b8]" />
      </ul>
      <div className="mb-0.5 mr-0.5 flex h-4 shrink-0 items-center justify-between bg-[#f0f0f0] text-[#444444]">
        <svg viewBox="0 0 6 8" className="h-2 w-1.5" fill="none" stroke="currentColor" strokeWidth="1.800" aria-hidden>
          <path d="M5 0L1 4l4 4" />
        </svg>
        <span className="ml-1.5 mr-auto h-full w-[151px] bg-[#cdcdcd]" />
        <svg viewBox="0 0 6 8" className="mr-0.5 h-2 w-1.5" fill="none" stroke="currentColor" strokeWidth="1.800" aria-hidden>
          <path d="M1 0l4 4-4 4" />
        </svg>
      </div>
    </aside>
  );
}

// Model space: shaded freeform plate, crest curves and the axis triad.
function Scene() {
  return (
    <svg viewBox="234 97 1682 1039" preserveAspectRatio="xMinYMin slice" className="absolute inset-0 size-full" aria-hidden>
      <defs>
        <linearGradient id="blueFace" x1="0" y1="0" x2="1" y2="1">
          <stop offset="0" stopColor="#7cc0e0" />
          <stop offset="1" stopColor="#23658a" />
        </linearGradient>
        <radialGradient id="sky" gradientUnits="userSpaceOnUse" cx="0" cy="0" r="1" gradientTransform="translate(1580 380) scale(760 520)">
          <stop offset="0" stopColor="#dbdde9" />
          <stop offset=".45" stopColor="#e1e4ed" />
          <stop offset=".75" stopColor="#f0f1f6" />
          <stop offset="1" stopColor="#ffffff" />
        </radialGradient>
        <radialGradient id="skyLeft" gradientUnits="userSpaceOnUse" cx="234" cy="620" r="260">
          <stop offset="0" stopColor="#dfe3ec" />
          <stop offset="1" stopColor="#ffffff" stopOpacity="0" />
        </radialGradient>
        <linearGradient id="floor" x1="0" y1="0" x2="0" y2="1">
          <stop offset="0" stopColor="#f3f4f8" stopOpacity="0" />
          <stop offset="1" stopColor="#f3f4f8" />
        </linearGradient>
        <clipPath id="plate">
          <path d="M606 407L1858 469 1545 821 293 760z" />
        </clipPath>
        <filter id="soft" x="-30%" y="-30%" width="160%" height="160%">
          <feGaussianBlur stdDeviation="13" />
        </filter>
        <filter id="softer" x="-30%" y="-60%" width="160%" height="220%">
          <feGaussianBlur stdDeviation="5" />
        </filter>
      </defs>
      <rect x="234" y="97" width="1682" height="1039" fill="#ffffff" />
      <rect x="234" y="97" width="1682" height="1039" fill="url(#sky)" />
      <rect x="234" y="97" width="500" height="1039" fill="url(#skyLeft)" />
      <rect x="234" y="980" width="1682" height="156" fill="url(#floor)" />
      <path d="M606 407L1858 469 1545 821 293 760z" fill="#51535f" />
      <g clipPath="url(#plate)">
        <g filter="url(#soft)">
          <path d="M1200 478L1310 514 1365 520 1392 550 1410 590 1350 588 1290 550z" fill="#656978" />
          <path d="M1230 488L1310 514 1350 520 1345 550 1300 545z" fill="#6f7285" />
          <path d="M1030 500L955 560" stroke="#5c606c" strokeWidth="18" fill="none" />
          <path d="M1160 622L1240 642 1270 675 1310 705 1420 716 1300 722 1240 690z" fill="#646876" />
          <path d="M1220 650Q1270 706 1380 712T1560 726" stroke="#595d69" strokeWidth="16" fill="none" />
          <path d="M900 738L1130 756" stroke="#585b67" strokeWidth="14" fill="none" />
          <path d="M975 612L900 650M1380 596L1310 625" stroke="#585b67" strokeWidth="12" fill="none" />
        </g>
        <g filter="url(#softer)">
          <path d="M1180 464L1250 492 1310 512 1322 522 1290 526 1240 500z" fill="#6d7084" />
          <path d="M1120 610L1190 632 1230 640 1200 646z" fill="#676a7b" />
          <path d="M1634 553L1690 577 1726 597 1740 606 1700 655 1680 670 1686 615 1668 575z" fill="#7d8092" />
          <path d="M1690 588L1708 612 1704 646 1688 664z" fill="#a2a4b4" />
        </g>
      </g>
      <path d="M606 407L1858 469 1545 821 293 760z" fill="none" stroke="#0f80bd" strokeWidth="1.500" />
      <g fill="none" stroke="#000000" strokeWidth="1.200">
        <path d="M1006 516C1050 500 1085 456 1150 456C1208 456 1262 502 1324 511" />
        <path d="M1298 506l18 5 8 0" strokeWidth="2" />
        <path d="M1380 594C1440 584 1530 543 1593 543C1640 543 1660 557 1692 573M1686 571h10" />
        <path d="M1380 594l18-5" strokeWidth="2" />
        <path d="M971 617C1000 609 1030 602 1062 602C1125 602 1160 630 1220 634" />
      </g>
      <g fontFamily="Liberation Sans, sans-serif" fontSize="11">
        <path d="M275 1078l9-10" stroke="#1c5c1c" strokeWidth="4" />
        <path d="M278 1066l7-3 1 8-5 3z" fill="#1b6b1b" />
        <path d="M274 1078l-3-22" stroke="#1d1dc0" strokeWidth="4" />
        <path d="M267 1059l3-8 6 7z" fill="#3030d8" stroke="#15157a" />
        <path d="M274 1078l20 1" stroke="#c41414" strokeWidth="4" />
        <path d="M292 1074l9 5-9 4z" fill="#e02222" stroke="#6e0d0d" />
        <text x="265" y="1050" fill="#0000e0">Z</text>
        <text x="283" y="1066" fill="#087a08">Y</text>
        <text x="301" y="1083" fill="#f00000">X</text>
      </g>
    </svg>
  );
}

function Viewport() {
  const views: [string, boolean][] = [
    ['zoomFit', false],
    ['zoomArea', false],
    ['prevView', false],
    ['section', false],
    ['orient', true],
    ['display', true],
    ['eye', true],
    ['ballBrush', false],
    ['ballGrid', true],
    ['monitor', true],
  ];

  return (
    <main className="relative flex-1 overflow-hidden">
      <Scene />
      <div className="relative flex h-[30px] items-center justify-center">
        {views.map(([name, more]) => (
          <button key={name} type="button" aria-label={name} className={clsx('flex items-center gap-2', more ? 'w-10' : 'w-[26px]')}>
            <Icon name={name} />
            {more && <Caret off />}
          </button>
        ))}
        <div className="absolute right-3.5 flex items-center text-[#8a8a8a]">
          {['M1 1h11v12H1zM5 4v6L2 7z', 'M1 1h11v12H1zM8 4v6l3-3z'].map((d) => (
            <button key={d} type="button" aria-label="Panel" className="w-[26px]">
              <svg viewBox="0 0 13 14" className="h-3.5 w-[13px]" fill="none" stroke="currentColor" strokeWidth="1.300" aria-hidden>
                <path d={d} />
              </svg>
            </button>
          ))}
          <button type="button" aria-label="Minimalizuj" className="flex h-3 w-6 items-end">
            <span className="h-[3px] w-2.5 bg-current" />
          </button>
          <button type="button" aria-label="Przywróć" className="w-7">
            <RestoreIcon />
          </button>
          <button type="button" aria-label="Zamknij">
            <CloseIcon />
          </button>
        </div>
      </div>
      <div className="absolute right-0 top-[59px] flex w-[26px] flex-col border-l border-t border-[#848484]">
        {['home', 'books', 'folderOpen', 'palette', 'ball', 'list'].map((name) => (
          <button key={name} type="button" aria-label={name} className={clsx('flex h-6 items-center justify-center border-b border-[#848484]', name === 'home' ? 'bg-[#f7f7f7]' : 'bg-[#d2d2d2]')}>
            <Icon name={name} />
          </button>
        ))}
      </div>
      <div className="absolute left-0 top-1/2 flex h-10 w-2 -translate-y-5 items-center justify-center border border-l-0 border-[#848484] bg-[#f7f7f7]">
        <span className="size-1.5 rounded-full border border-[#8a8a8a] bg-[#cccccc]" />
      </div>
    </main>
  );
}

function Footer() {
  return (
    <footer className="shrink-0 bg-[#f7f7f7] text-[#444444]">
      <div className="flex h-4 items-stretch border-b border-t border-[#848484] pl-[23px] leading-3">
        {['M9 2v7L4 5.500zM3 2v7', 'M8 2v7L3 5.500z', 'M3 2v7l5-3.500z', 'M3 2v7l5-3.500zM9 2v7'].map((d) => (
          <button key={d} type="button" aria-label="Karta" className="flex w-4 items-center justify-center border border-[#8f8f8f] bg-[#acacac]">
            <svg viewBox="0 0 12 11" className="h-[11px] w-3" fill="#8a8a8a" stroke="#8a8a8a" aria-hidden>
              <path d={d} />
            </svg>
          </button>
        ))}
        <button type="button" className="w-[57px] pl-1 font-bold">Model</button>
        <button type="button" className="w-[113px] border-x border-[#848484] bg-[#d2d2d2] pr-2">Badanie ruchu 1</button>
      </div>
      <div className="flex h-4 items-center pt-0.5">
        <span>SOLIDWORKS Premium 2016 x64 Edition</span>
        <span className="ml-auto h-4 w-[9px] border-x border-[#d0d0d0]" />
        <span className="h-4 w-2 border-r border-[#d0d0d0]" />
        <span className="h-4 w-4 border-r border-[#d0d0d0]" />
        <span className="w-[138px] text-center">MMGS</span>
        <svg viewBox="0 0 6 4" className="-ml-3 h-1 w-1.5" aria-hidden>
          <path d="M0 3.500h6L3 0z" fill="#333333" />
        </svg>
        <svg viewBox="0 0 16 16" className="ml-[86px] mr-1.5 size-4" strokeLinejoin="round" aria-hidden>
          <path d="M1 9l7-7 6-1 1 6-6 8H4z" fill="#f2c21e" stroke="#8a5a00" strokeWidth="1.300" />
          <circle cx="11.500" cy="4.500" r="1.500" fill="#ffffff" stroke="#8a5a00" />
          <path d="M4 9l4 4M6 7l4 4" stroke="#fff3b0" />
        </svg>
      </div>
    </footer>
  );
}

export default function App() {
  return (
    <div className="flex h-screen flex-col overflow-hidden bg-[#f7f7f7] font-['Open_Sans','Noto_Sans',sans-serif] text-[11px] leading-4">
      <TitleBar />
      <Toolbars />
      <div className="flex min-h-0 flex-1">
        <FeaturePanel />
        <Viewport />
      </div>
      <Footer />
    </div>
  );
}
